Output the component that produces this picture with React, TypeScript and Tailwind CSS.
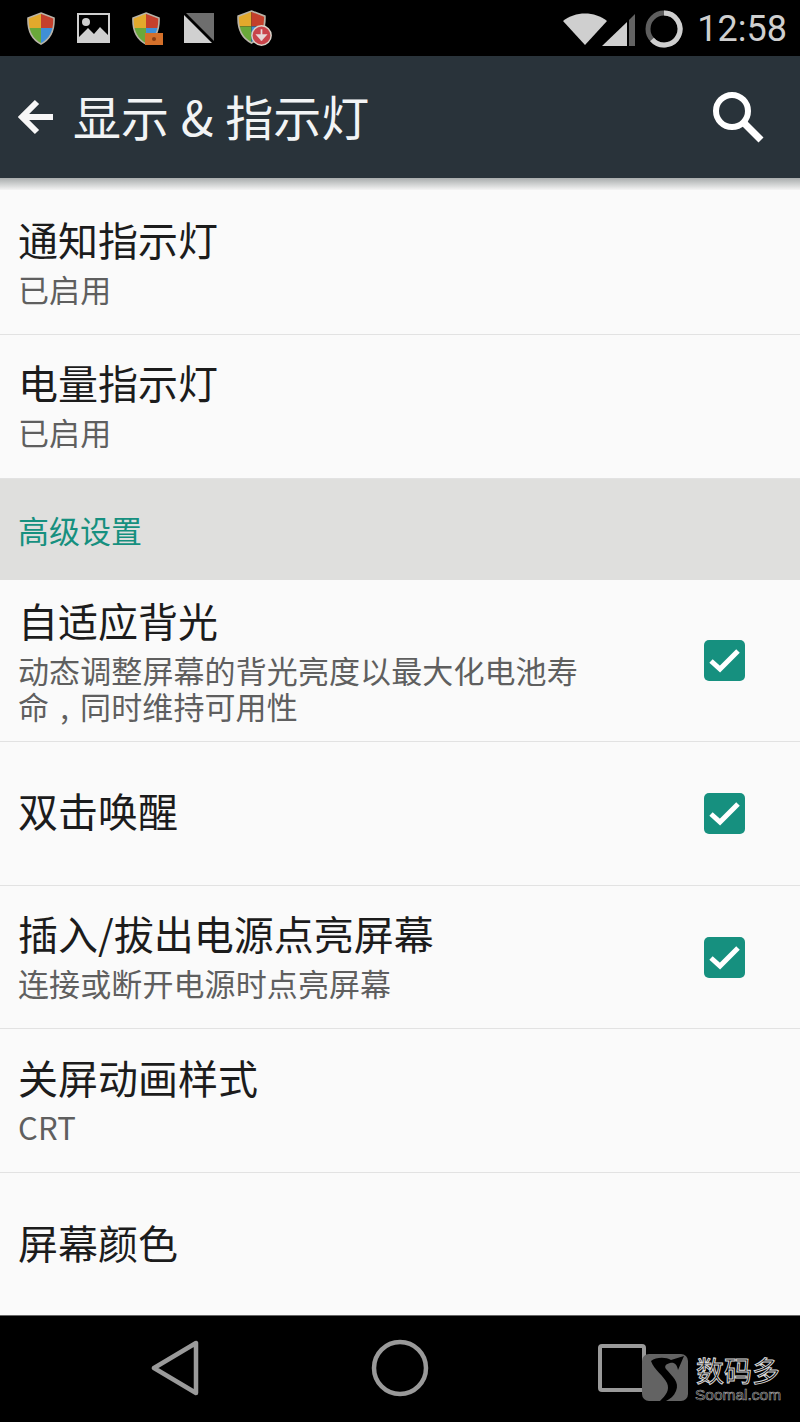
import type { ReactNode } from 'react'

const cjk = 'font-["Noto_Sans_CJK_SC",sans-serif]'

// Windows-style shield used by the notification icons
function Shield({ id, className }: { id: string; className: string }) {
  const d = 'M14 1 L27 6 C27.5 18 24 27 14 32 C4 27 .5 18 1 6 Z'
  return (
    <svg viewBox="0 0 28 33" className={className}>
      <clipPath id={id}>
        <path d={d} />
      </clipPath>
      <g clipPath={`url(#${id})`}>
        <rect x="0" y="0" width="14" height="16" fill="#e3a92c" />
        <rect x="14" y="0" width="14" height="16" fill="#c4402c" />
        <rect x="0" y="16" width="14" height="17" fill="#6aa83a" />
        <rect x="14" y="16" width="14" height="17" fill="#3f8fd6" />
      </g>
      <path d={d} fill="none" stroke="#b9b4a8" strokeWidth="1.6" />
    </svg>
  )
}

function StatusIcons() {
  return (
    <div className="flex items-center pl-[27px] h-full">
      <Shield id="s1" className="w-[28px] h-[33px]" />
      <svg viewBox="0 0 33 30" className="w-[33px] h-[30px] ml-[22px]">
        <rect x="1" y="1" width="31" height="28" fill="none" stroke="#cfcfcf" strokeWidth="2" />
        <path d="M1 29 L1 25 L11 15 L17 21 L23 14 L32 23 L32 29 Z" fill="#cfcfcf" />
        <circle cx="9" cy="9" r="4" fill="#cfcfcf" />
      </svg>
      <div className="relative ml-[22px] w-[30px] h-[33px]">
        <Shield id="s2" className="w-[28px] h-[33px]" />
        <div className="absolute right-[-1px] bottom-0 w-[18px] h-[12px] bg-[#d4702a] flex items-center justify-center">
          <div className="w-[4px] h-[4px] rounded-full bg-[#8a3f14]" />
        </div>
      </div>
      <svg viewBox="0 0 30 30" className="w-[30px] h-[30px] ml-[22px]">
        <path d="M2 0 L30 0 L30 28 Z" fill="#6e6e6e" />
        <path d="M0 2 L28 30 L0 30 Z" fill="#d0d0d0" />
      </svg>
      <div className="relative ml-[22px] w-[36px] h-[36px]">
        <Shield id="s3" className="w-[31px] h-[34px]" />
        <svg viewBox="0 0 20 20" className="absolute right-0 bottom-0 w-[21px] h-[21px]">
          <circle cx="10" cy="10" r="9.2" fill="#c9434a" stroke="#d8d2c8" strokeWidth="1.4" />
          <path d="M10 4 V15 M6 9.5 H14 L10 14 Z" stroke="#e6d8d8" strokeWidth="1.6" fill="#e6d8d8" />
        </svg>
      </div>
    </div>
  )
}

function StatusRight() {
  return (
    <div className="flex items-center h-full pr-[13px] pt-[2px]">
      <svg viewBox="0 0 44 36" className="w-[44px] h-[36px]">
        <path d="M0 10 C12 0 32 0 44 10 L22 34 Z" fill="#cfcfcf" />
      </svg>
      <svg viewBox="0 0 34 36" className="w-[34px] h-[36px] ml-[-5px]">
        <path d="M0 35 L25 11 L25 35 Z" fill="#cfcfcf" />
        <path d="M27 9 L33 3 L33 35 L27 35 Z" fill="#636363" />
      </svg>
      <svg viewBox="0 0 38 38" className="w-[38px] h-[38px] ml-[9px]">
        <circle cx="19" cy="19" r="16" fill="none" stroke="#5e5e5e" strokeWidth="5" />
        <path d="M19 3 A16 16 0 1 1 7 29.5" fill="none" stroke="#cfcfcf" strokeWidth="5" />
      </svg>
      <span className="ml-[14px] font-['Roboto',sans-serif] text-[36px] leading-none text-[#cfcfcf]">12:58</span>
    </div>
  )
}

function Check() {
  return (
    <div className="w-[41px] h-[41px] rounded-[5px] bg-[#16907f] flex items-center justify-center shrink-0">
      <svg viewBox="0 0 41 41" className="w-[41px] h-[41px]">
        <path d="M7 21 L16 29 L34 11" fill="none" stroke="#fff" strokeWidth="5" />
      </svg>
    </div>
  )
}

function Row({
  title,
  sub,
  checked,
  className,
  textClass = '',
  subClass = 'leading-[50px] mt-[1px]',
}: {
  title: string
  sub?: ReactNode
  checked?: boolean
  className: string
  textClass?: string
  subClass?: string
}) {
  return (
    <div className={`flex items-center justify-between pl-[18px] pr-[55px] border-b border-[#e2e2e2] ${className}`}>
      <div className={`min-w-0 ${textClass}`}>
        <div className="text-[40px] leading-[48px] text-[#1c1c1c]">{title}</div>
        {sub && <div className={`text-[31px] tracking-[0.1px] text-[#5f5f5f] w-[565px] ${subClass}`}>{sub}</div>}
      </div>
      {checked && <Check />}
    </div>
  )
}

export default function App() {
  return (
    <div className={`w-[800px] h-[1422px] flex flex-col bg-[#fafafa] overflow-hidden ${cjk}`}>
      {/* Status bar */}
      <div className="h-[56px] bg-black flex items-center justify-between shrink-0">
        <StatusIcons />
        <StatusRight />
      </div>

      {/* App bar */}
      <header className="h-[122px] bg-[#29333a] flex items-center justify-between pl-[18px] pr-[36px] shrink-0">
        <div className="flex items-center">
          <svg viewBox="0 0 36 36" className="w-[36px] h-[36px]">
            <path d="M35 18 H5 M19 3 L4 18 L19 33" fill="none" stroke="#f7f7f7" strokeWidth="6" />
          </svg>
          <h1 className="ml-[19px] mb-[5px] text-[48px] leading-none font-normal text-[#f2f4f5] whitespace-nowrap [word-spacing:1px]">显示 &amp; 指示灯</h1>
        </div>
        <svg viewBox="0 0 52 52" className="w-[52px] h-[52px]">
          <circle cx="20" cy="20" r="16" fill="none" stroke="#fff" strokeWidth="6" />
          <path d="M32 32 L49 49" stroke="#fff" strokeWidth="7" />
        </svg>
      </header>
      <div className="h-[12px] bg-gradient-to-b from-[#a9adad] to-[#f4f4f4] shrink-0" />

      {/* Settings list */}
      <main className="flex-1 min-h-0">
        <Row title="通知指示灯" sub="已启用" className="h-[145px]" textClass="pt-[4px]" />
        <Row title="电量指示灯" sub="已启用" className="h-[144px]" textClass="pt-[2px]" />
        <div className="h-[101px] bg-[#dfdfdd] pl-[18px] pt-[2px] flex items-center text-[31px] text-[#16907f]">高级设置</div>
        <Row
          title="自适应背光"
          sub={
            <>
              动态调整屏幕的背光亮度以最大化电池寿命
              <span className="inline-block w-[31px] text-center">,</span>
              同时维持可用性
            </>
          }
          checked
          subClass="leading-[36px] mt-[8px]"
          textClass="pb-[2px]"
          className="h-[162px]"
        />
        <Row title="双击唤醒" checked className="h-[144px]" textClass="pb-[7px]" />
        <Row title="插入/拔出电源点亮屏幕" sub="连接或断开电源时点亮屏幕" checked className="h-[143px]" textClass="pt-[3px]" />
        <Row title="关屏动画样式" sub="CRT" className="h-[144px]" textClass="pt-[3px]" />
        <div className="h-[143px] pl-[18px] pb-[6px] flex items-center text-[40px] text-[#1c1c1c]">屏幕颜色</div>
      </main>

      {/* Navigation bar */}
      <nav className="relative h-[107px] bg-black border-t border-[#666] shrink-0 flex items-center justify-around">
        <div className="w-[800px] flex items-center pl-[150px] pb-[2px]">
          <svg viewBox="0 0 50 56" className="w-[50px] h-[56px]">
            <path d="M46 3 L46 53 L4 28 Z" fill="none" stroke="#9a9a9a" strokeWidth="4.5" strokeLinejoin="round" />
          </svg>
          <svg viewBox="0 0 58 58" className="w-[58px] h-[58px] ml-[171px]">
            <circle cx="29" cy="29" r="26" fill="none" stroke="#9a9a9a" strokeWidth="4.5" />
          </svg>
          <div className="w-[48px] h-[48px] ml-[169px] rounded-[4px] border-[4px] border-[#9a9a9a]" />
        </div>

        {/* Watermark */}
        <div className="absolute left-[642px] top-[38px] flex items-center">
          <svg viewBox="0 0 46 47" className="w-[46px] h-[47px]">
            <rect width="46" height="47" rx="7" fill="#636363" />
            <path d="M9 7 C14 3 24 3 29 6 L42 2 L36 16 C35 10 32 8 28 9 C24 10 22 12 24 15 C30 22 38 28 34 37 C32 42 28 45 24 47 L18 47 C24 41 28 36 25 29 C22 22 12 16 9 7 Z" fill="#000" />
          </svg>
          <div className="ml-[7px] flex flex-col items-center">
            <span className={`text-[28px] leading-[30px] text-transparent [-webkit-text-stroke:1px_#d8d8d8] ${cjk}`}>数码多</span>
            <span className="mt-[3px] font-['Liberation_Sans',sans-serif] text-[15.5px] leading-[13px] text-transparent [-webkit-text-stroke:0.6px_#aaa]">Soomal.com</span>
          </div>
        </div>
      </nav>
    </div>
  )
}
